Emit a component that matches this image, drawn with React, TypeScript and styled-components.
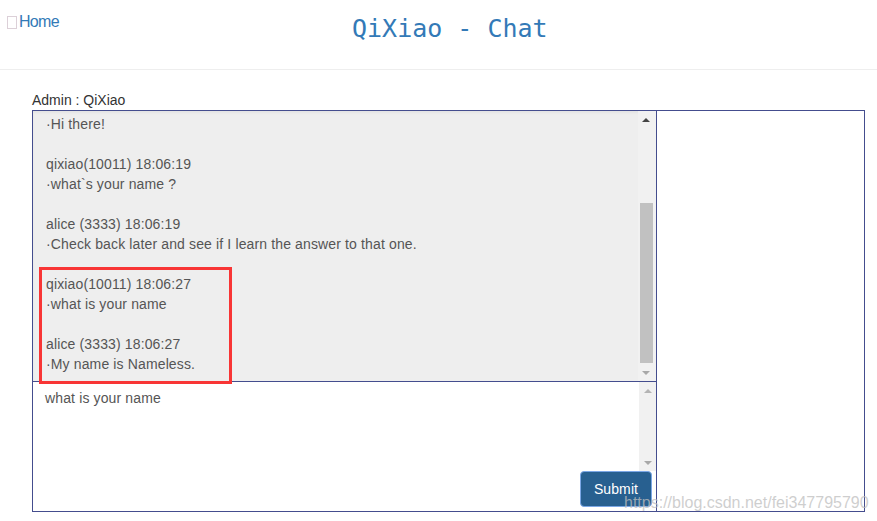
import React from "react";
import styled, { createGlobalStyle } from "styled-components";

const Global = createGlobalStyle`
  html, body { margin: 0; padding: 0; background: #fff; overflow: hidden; }
  body { font-family: "Liberation Sans", Arial, sans-serif; font-size: 14px; color: #333; }
  * { box-sizing: border-box; }
`;

const Page = styled.div`
  position: relative;
  width: 877px;
  height: 521px;
  overflow: hidden;
`;

const Header = styled.header`
  display: grid;
  grid-template-columns: 345px auto;
  height: 70px;
  padding-left: 7px;
  border-bottom: 1px solid #eeeeee;
`;

const HomeLink = styled.a`
  display: flex;
  align-items: flex-start;
  gap: 2px;
  padding-top: 13px;
  font-size: 16px;
  line-height: 18px;
  letter-spacing: -0.7px;
  color: #337ab7;
  text-decoration: none;
`;

const Tofu = styled.span`
  width: 10px;
  height: 13px;
  margin-top: 3px;
  border: 1px solid #dcd0d8;
`;

const Title = styled.h1`
  margin: 0;
  padding-top: 15px;
  font-family: "DejaVu Sans Mono", monospace;
  font-size: 25px;
  font-weight: 400;
  line-height: 28px;
  color: #337ab7;
`;

const Main = styled.main`
  padding: 22px 12px 0 32px;
`;

const AdminLine = styled.div`
  height: 18px;
  line-height: 16px;
  color: #333;
`;

const Frame = styled.div`
  display: grid;
  grid-template-columns: 624px 1fr;
  height: 402px;
  border: 1px solid #444d8e;
`;

const LeftColumn = styled.div`
  display: flex;
  flex-direction: column;
  border-right: 1px solid #444d8e;
`;

const Messages = styled.div`
  display: flex;
  height: 271px;
  background: #eeeeee;
  border-bottom: 1px solid #444d8e;
  box-shadow: inset 0 2px 2px #e4e4e4;
`;

const MessageList = styled.div`
  flex: 1;
  padding: 3px 0 0 13px;
  line-height: 20px;
  letter-spacing: 0.135px;
  color: #555;
  overflow: hidden;
`;

const Entry = styled.div`
  margin-bottom: 20px;
`;

const Track = styled.div<{ $pale?: boolean }>`
  position: relative;
  display: flex;
  flex-direction: column;
  align-items: center;
  justify-content: space-between;
  flex: 0 0 ${(p) => (p.$pale ? "17px" : "18px")};
  padding: 7px ${(p) => (p.$pale ? "0" : "2px")} 6px 0;
  background: #f1f1f1;
`;

const ArrowUp = styled.i<{ $pale?: boolean }>`
  width: 0;
  height: 0;
  border-left: 4px solid transparent;
  border-right: 4px solid transparent;
  border-bottom: 4px solid ${(p) => (p.$pale ? "#b4b4b4" : "#444")};
`;

const ArrowDown = styled.i`
  width: 0;
  height: 0;
  border-left: 4px solid transparent;
  border-right: 4px solid transparent;
  border-top: 4px solid #a8a8a8;
`;

const Thumb = styled.div`
  position: absolute;
  left: 2px;
  top: 92px;
  width: 13px;
  height: 160px;
  background: #c1c1c1;
`;

const Compose = styled.div`
  display: flex;
  flex-direction: column;
  flex: 1;
`;

const InputRow = styled.div`
  display: flex;
  height: 89px;
`;

const InputText = styled.div`
  flex: 1;
  padding: 6px 0 0 12px;
  line-height: 20px;
  letter-spacing: 0.135px;
  color: #555;
`;

const Footer = styled.div`
  display: flex;
  justify-content: flex-end;
  padding-right: 4px;
`;

const Submit = styled.button`
  width: 72px;
  height: 36px;
  padding: 0;
  background: #286090;
  border: 1px solid #7ba7e6;
  border-radius: 4px;
  font-family: inherit;
  font-size: 14px;
  letter-spacing: 0.1px;
  color: #fff;
`;

const Annotation = styled.div`
  position: absolute;
  left: 39px;
  top: 267px;
  width: 193px;
  height: 117px;
  border: 3px solid #f83535;
`;

const Watermark = styled.div`
  position: absolute;
  left: 624px;
  top: 493px;
  font-size: 16px;
  line-height: 19px;
  white-space: nowrap;
  color: rgba(190, 190, 190, 0.75);
`;

const entries: [string | null, string][] = [
  [null, "·Hi there!"],
  ["qixiao(10011) 18:06:19", "·what`s your name ?"],
  ["alice (3333) 18:06:19", "·Check back later and see if I learn the answer to that one."],
  ["qixiao(10011) 18:06:27", "·what is your name"],
  ["alice (3333) 18:06:27", "·My name is Nameless."],
];

export default function App() {
  return (
    <Page>
      <Global />
      <Header>
        <HomeLink href="#">
          <Tofu />
          Home
        </HomeLink>
        <Title>QiXiao - Chat</Title>
      </Header>
      <Main>
        <AdminLine>Admin : QiXiao</AdminLine>
        <Frame>
          <LeftColumn>
            <Messages>
              <MessageList>
                {entries.map(([head, body]) => (
                  <Entry key={body}>
                    {head && <div>{head}</div>}
                    <div>{body}</div>
                  </Entry>
                ))}
              </MessageList>
              <Track>
                <ArrowUp />
                <Thumb />
                <ArrowDown />
              </Track>
            </Messages>
            <Compose>
              <InputRow>
                <InputText>what is your name</InputText>
                <Track $pale>
                  <ArrowUp $pale />
                  <ArrowDown />
                </Track>
              </InputRow>
              <Footer>
                <Submit>Submit</Submit>
              </Footer>
            </Compose>
          </LeftColumn>
          <div />
        </Frame>
      </Main>
      <Annotation />
      <Watermark>https://blog.csdn.net/fei347795790</Watermark>
    </Page>
  );
}
